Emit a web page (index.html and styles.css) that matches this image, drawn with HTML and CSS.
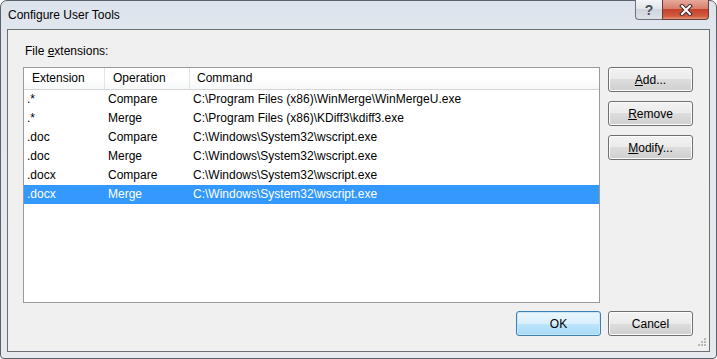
FILE: index.html
```html
<!DOCTYPE html>
<html lang="en">
<head>
  <meta charset="UTF-8" />
  <title>Configure User Tools</title>
  <link rel="stylesheet" href="styles.css">
</head>
<body>
  <div class="window">
    <div class="titlebar">
      <span class="title">Configure User Tools</span>
      <div class="caption-buttons">
        <div class="cap-btn help">?</div>
        <div class="cap-btn close">
          <svg width="14" height="12" viewBox="0 0 14 12">
            <path d="M3 2 L11 10 M11 2 L3 10" stroke="#3c2a2a" stroke-width="4" stroke-linecap="square" fill="none"/>
            <path d="M3 2 L11 10 M11 2 L3 10" stroke="#ffffff" stroke-width="2" stroke-linecap="square" fill="none"/>
          </svg>
        </div>
      </div>
    </div>

    <div class="client">
      <div class="label">File <u>e</u>xtensions:</div>

      <div class="main">
        <div class="listview">
          <div class="lv-header">
            <div class="col c1">Extension</div>
            <div class="col c2">Operation</div>
            <div class="col c3">Command</div>
          </div>
          <div class="lv-rows" id="rows"></div>
        </div>

        <div class="side-buttons">
          <button class="btn"><u>A</u>dd...</button>
          <button class="btn"><u>R</u>emove</button>
          <button class="btn"><u>M</u>odify...</button>
        </div>
      </div>

      <div class="footer">
        <button class="btn default">OK</button>
        <button class="btn">Cancel</button>
      </div>

      <svg class="grip" width="10" height="10" viewBox="0 0 10 10">
        <rect x="8" y="0" width="2" height="2" fill="#b8b8b8"/>
        <rect x="5" y="3" width="2" height="2" fill="#b8b8b8"/>
        <rect x="8" y="3" width="2" height="2" fill="#b8b8b8"/>
        <rect x="2" y="6" width="2" height="2" fill="#b8b8b8"/>
        <rect x="5" y="6" width="2" height="2" fill="#b8b8b8"/>
        <rect x="8" y="6" width="2" height="2" fill="#b8b8b8"/>
      </svg>
    </div>
  </div>

<script>
  const tools = [
    { ext: '.*', op: 'Compare', cmd: 'C:\\Program Files (x86)\\WinMerge\\WinMergeU.exe' },
    { ext: '.*', op: 'Merge', cmd: 'C:\\Program Files (x86)\\KDiff3\\kdiff3.exe' },
    { ext: '.doc', op: 'Compare', cmd: 'C:\\Windows\\System32\\wscript.exe' },
    { ext: '.doc', op: 'Merge', cmd: 'C:\\Windows\\System32\\wscript.exe' },
    { ext: '.docx', op: 'Compare', cmd: 'C:\\Windows\\System32\\wscript.exe' },
    { ext: '.docx', op: 'Merge', cmd: 'C:\\Windows\\System32\\wscript.exe' }
  ];
  const selected = 5;

  const rowsEl = document.getElementById('rows');
  tools.forEach((t, i) => {
    const row = document.createElement('div');
    row.className = 'lv-row' + (i === selected ? ' selected' : '');
    row.innerHTML = `
      <div class="cell c1">${t.ext}</div>
      <div class="cell c2">${t.op}</div>
      <div class="cell c3">${t.cmd}</div>
    `;
    rowsEl.appendChild(row);
  });
</script>
</body>
</html>
```

FILE: styles.css
```css
* {
  box-sizing: border-box;
}
body {
  margin: 0;
  font-family: 'Liberation Sans', Arial, sans-serif;
  font-size: 12px;
  color: #000;
  background: #fff;
}

/* Window frame */
.window {
  width: 717px;
  height: 359px;
  border: 1px solid #5b6169;
  border-radius: 7px 7px 4px 4px;
  background: linear-gradient(#dbe3ec, #e3e8ee 40px, #e6eaef);
  display: flex;
  flex-direction: column;
  padding: 0 6px 6px 6px;
}

.titlebar {
  height: 28px;
  display: flex;
  justify-content: space-between;
  align-items: flex-start;
}
.title {
  margin-top: 7px;
  margin-left: 1px;
  line-height: 15px;
  color: #000;
}

.caption-buttons {
  display: flex;
  margin-right: 1px;
  margin-top: -1px;
}
.cap-btn {
  height: 20px;
  display: flex;
  align-items: center;
  justify-content: center;
  border: 1px solid #6d737b;
  border-top: none;
}
.cap-btn.help {
  width: 27px;
  border-right: none;
  border-radius: 0 0 0 4px;
  background: linear-gradient(#f3f5f7, #e2e6ea 45%, #cfd5dc 50%, #dde2e7);
  color: #4a4f56;
  font-size: 14px;
  font-weight: bold;
}
.cap-btn.close {
  width: 47px;
  border-color: #6a3a36;
  border-radius: 0 0 4px 0;
  background: linear-gradient(#e6a99b, #d7806c 45%, #c4432d 50%, #d25a3f 85%, #e49a7a);
}

/* Client area */
.client {
  position: relative;
  flex: 1;
  border: 1px solid #6a6f76;
  background: #f0f0f0;
  padding: 14px 16px 0 15px;
  display: flex;
  flex-direction: column;
}

.label {
  line-height: 15px;
  padding-left: 2px;
  margin-bottom: 8px;
}

.main {
  display: flex;
  gap: 8px;
}

/* List view */
.listview {
  width: 578px;
  height: 236px;
  border: 1px solid #9a9a9a;
  background: #fff;
}
.lv-header {
  display: flex;
  height: 22px;
  border-bottom: 1px solid #d5d5d5;
  background: linear-gradient(#ffffff, #ffffff 50%, #f7f8f9);
}
.lv-header .col {
  line-height: 21px;
  padding-left: 8px;
  border-right: 1px solid #e3e4e6;
}
.lv-header .c3 {
  padding-left: 7px;
  border-right: none;
}

.c1 {
  width: 81px;
}
.c2 {
  width: 85px;
}
.c3 {
  flex: 1;
}

.lv-row {
  display: flex;
  height: 19px;
  line-height: 19px;
}
.lv-row .cell {
  padding-left: 3px;
  white-space: nowrap;
}
.lv-row.selected {
  background: #3399ff;
  color: #fff;
}

/* Buttons */
.side-buttons {
  display: flex;
  flex-direction: column;
  gap: 9px;
}

.btn {
  width: 85px;
  height: 25px;
  padding: 0;
  font-family: 'Liberation Sans', Arial, sans-serif;
  font-size: 12px;
  color: #000;
  border: 1px solid #707070;
  border-radius: 3px;
  background: linear-gradient(#f2f2f2, #ebebeb 50%, #dddddd 50%, #cfcfcf);
  box-shadow: inset 0 0 0 1px #fcfcfc;
}
.btn.default {
  border-color: #3c7fb1;
  background: linear-gradient(#eaf6fd, #d9f0fc 50%, #bee6fd 50%, #a7d9f5);
  box-shadow: inset 0 0 0 1px #c9e7f8;
}

.footer {
  display: flex;
  justify-content: flex-end;
  gap: 7px;
  margin-top: 8px;
}

.grip {
  position: absolute;
  right: 3px;
  bottom: 3px;
}
```
